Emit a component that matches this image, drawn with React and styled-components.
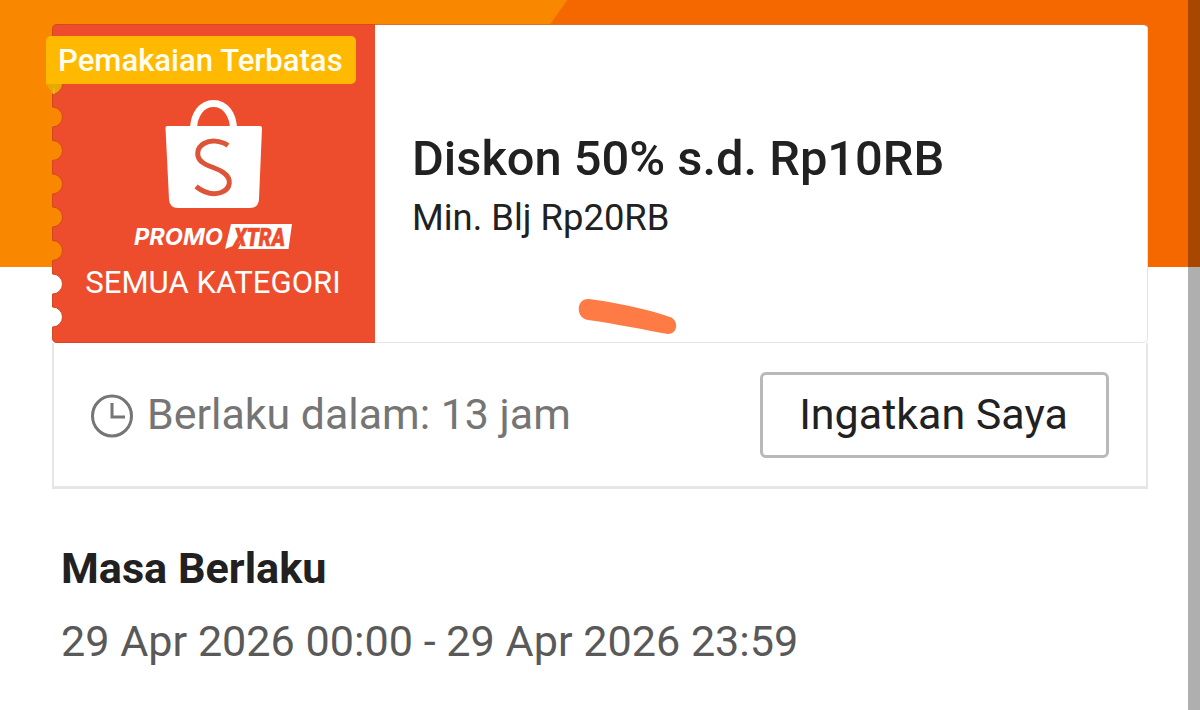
import React from "react";
import styled, { createGlobalStyle } from "styled-components";

const GlobalStyle = createGlobalStyle`
  * {
    box-sizing: border-box;
  }
  body {
    margin: 0;
    font-family: Roboto, sans-serif;
    background: #fff;
  }
`;

const Page = styled.main`
  position: relative;
  width: 1200px;
  height: 710px;
  padding: 24px 52px 0;
  overflow: hidden;
  background: linear-gradient(125.3deg, #f98700 462.5px, #f56800 463.5px)
    no-repeat 0 0 / 1200px 267px #fff;
`;

const Scrim = styled.div`
  position: absolute;
  top: 0;
  right: 0;
  bottom: 0;
  width: 12px;
  background: rgba(0, 0, 0, 0.315);
`;

const Voucher = styled.section`
  position: relative;
  display: flex;
  width: 1096px;
  height: 319px;
`;

const Edge = styled.svg`
  flex: none;
  display: block;
`;

const Brand = styled.div`
  display: flex;
  flex-direction: column;
  align-items: center;
  width: 307px;
  padding: 75px 16px 0 0;
  background: #ee4d2d;
  border-top: 1px solid #d9481f;
  border-bottom: 1px solid #d14a2c;

  svg {
    display: block;
    flex: none;
    overflow: visible;
  }
`;

const Category = styled.div`
  margin: 11px 1px 0 0;
  font-size: 31.1px;
  line-height: 36px;
  color: #fff;
  white-space: nowrap;
`;

const Details = styled.div`
  flex: 1;
  padding: 105px 0 0 37px;
  background: #fff;
  border: 1px solid #e8e4e0;
  border-left: 0;
  border-top-color: #d9722a;
  border-radius: 0 5px 5px 0;
`;

const Text = styled.p`
  margin: 0;
  white-space: nowrap;
  font-size: ${(props) => props.$size}px;
  font-weight: ${(props) => props.$weight || 400};
  line-height: ${(props) => props.$line}px;
  color: ${(props) => props.$color || "#212121"};
`;

const Badge = styled.div`
  position: absolute;
  top: 12px;
  left: -6px;
  width: 310px;
  height: 48px;
  padding-left: 12px;
  border-radius: 5px 5px 5px 0;
  background: #ffb900;
`;

const Tail = styled.svg`
  position: absolute;
  top: 48px;
  left: 0;
`;

const Stroke = styled.svg`
  position: absolute;
  left: 525px;
  top: 272px;
`;

const Status = styled.section`
  display: flex;
  align-items: center;
  justify-content: space-between;
  width: 1096px;
  height: 146px;
  padding: 1px 37px 0;
  border: 2px solid #e6e6e6;
  border-bottom-width: 3px;
  border-top: 0;
  background: #fff;
`;

const Countdown = styled.div`
  display: flex;
  align-items: center;
  gap: 14px;
  padding-bottom: 2px;

  svg {
    margin-top: 4px;
  }
`;

const RemindButton = styled.button`
  width: 349px;
  height: 86px;
  padding: 0 2px 2px 0;
  border: 3px solid #b9b9b9;
  border-radius: 6px;
  background: #fff;
  color: #212121;
  font: 400 43px/78px Roboto, sans-serif;
`;

const Period = styled.section`
  padding: 54px 0 0 9px;
`;

const notches = [84, 117, 150.5, 184, 217, 250.5, 284, 317].map((y) => y - 24);

const edgePath =
  "M17 0.5H5Q0.5 0.5 0.5 5" +
  notches.map((y) => `V${y - 10}A10 10 0 0 1 0.5 ${y + 10}`).join("") +
  "V314Q0.5 318.5 5 318.5H17";

const TicketEdge = () => (
  <Edge width="16" height="319" viewBox="0 0 16 319">
    <path d={edgePath} fill="#ee4d2d" stroke="#d4481f" />
  </Edge>
);

const Bag = () => (
  <svg width="98" height="110" viewBox="0 0 98 110">
    <path d="M28.5 30C28.5 14 37 3.500 48.500 3.500S68.500 14 68.500 30" fill="none" stroke="#fff" strokeWidth="7" />
    <path d="M2 26H95Q97 26 97 28L94 99Q93.500 108 85 108H13Q4.500 108 4 99L0.500 28Q0.500 26 2 26Z" fill="#fff" />
    <path
      d="M63 45.500C55 40 45 40 39 43.500C31 48 31 57 37 62C42 66.500 53 68 59 73C67 79 66 89 56 92.500C47 95.500 38 92 31 86.500"
      fill="none"
      stroke="#dc5539"
      strokeWidth="5"
    />
  </svg>
);

const PromoXtra = () => (
  <svg width="162" height="44" viewBox="0 -8 162 44">
    <path d="M98 6H159L155.500 31H105L110 21L105 26L92 31Z" fill="#fff" />
    <text x="1" y="26.500" fill="#fff" fontFamily="Inter" fontSize="23" fontWeight="700" fontStyle="italic" textLength="89" lengthAdjust="spacingAndGlyphs">
      PROMO
    </text>
    <text
      x="101"
      y="28"
      fill="#ee4d2d"
      stroke="#ee4d2d"
      strokeWidth="0.6"
      fontFamily="Roboto"
      fontSize="26"
      fontWeight="900"
      fontStyle="italic"
      textLength="51"
      lengthAdjust="spacingAndGlyphs"
    >
      XTRA
    </text>
  </svg>
);

const Clock = () => (
  <svg width="42" height="44" viewBox="0 0 42 44">
    <ellipse cx="21" cy="22" rx="19.500" ry="20" fill="none" stroke="#757575" strokeWidth="3" />
    <path d="M21 9V23H34" fill="none" stroke="#757575" strokeWidth="3" />
  </svg>
);

const App = () => {
  return (
    <>
      <GlobalStyle />
      <Page>
        <Voucher>
          <TicketEdge />
          <Brand>
            <Bag />
            <PromoXtra />
            <Category>SEMUA KATEGORI</Category>
          </Brand>
          <Details>
            <Text $size={48.8} $line={58} $weight={500}>
              Diskon 50% s.d. Rp10RB
            </Text>
            <Text $size={36.4} $line={60}>
              Min. Blj Rp20RB
            </Text>
          </Details>
          <Badge>
            <Text $size={31.1} $line={49} $weight={500} $color="#fffdf0">
              Pemakaian Terbatas
            </Text>
            <Tail width="18" height="11" viewBox="0 0 18 11">
              <path d="M0 0H16Q14 8 7 10Z" fill="#e8a800" />
              <path d="M8 4V10" stroke="#f5c235" />
            </Tail>
          </Badge>
          <Stroke width="102" height="40" viewBox="0 0 102 40">
            <path
              d="M12 3C35 6 67 12 93 21C102 24 101 38 91 38C68 34 40 28 11 24C-2 22 -1 2 12 3Z"
              fill="#ff7b45"
            />
          </Stroke>
        </Voucher>
        <Status>
          <Countdown>
            <Clock />
            <Text $size={42.9} $line={50} $color="#757575">
              Berlaku dalam: 13 jam
            </Text>
          </Countdown>
          <RemindButton>Ingatkan Saya</RemindButton>
        </Status>
        <Period>
          <Text $size={43.2} $line={52} $weight={700}>
            Masa Berlaku
          </Text>
          <Text $size={43.15} $line={94} $color="#595959">
            29 Apr 2026 00:00 - 29 Apr 2026 23:59
          </Text>
        </Period>
        <Scrim />
      </Page>
    </>
  );
};

export default App;
